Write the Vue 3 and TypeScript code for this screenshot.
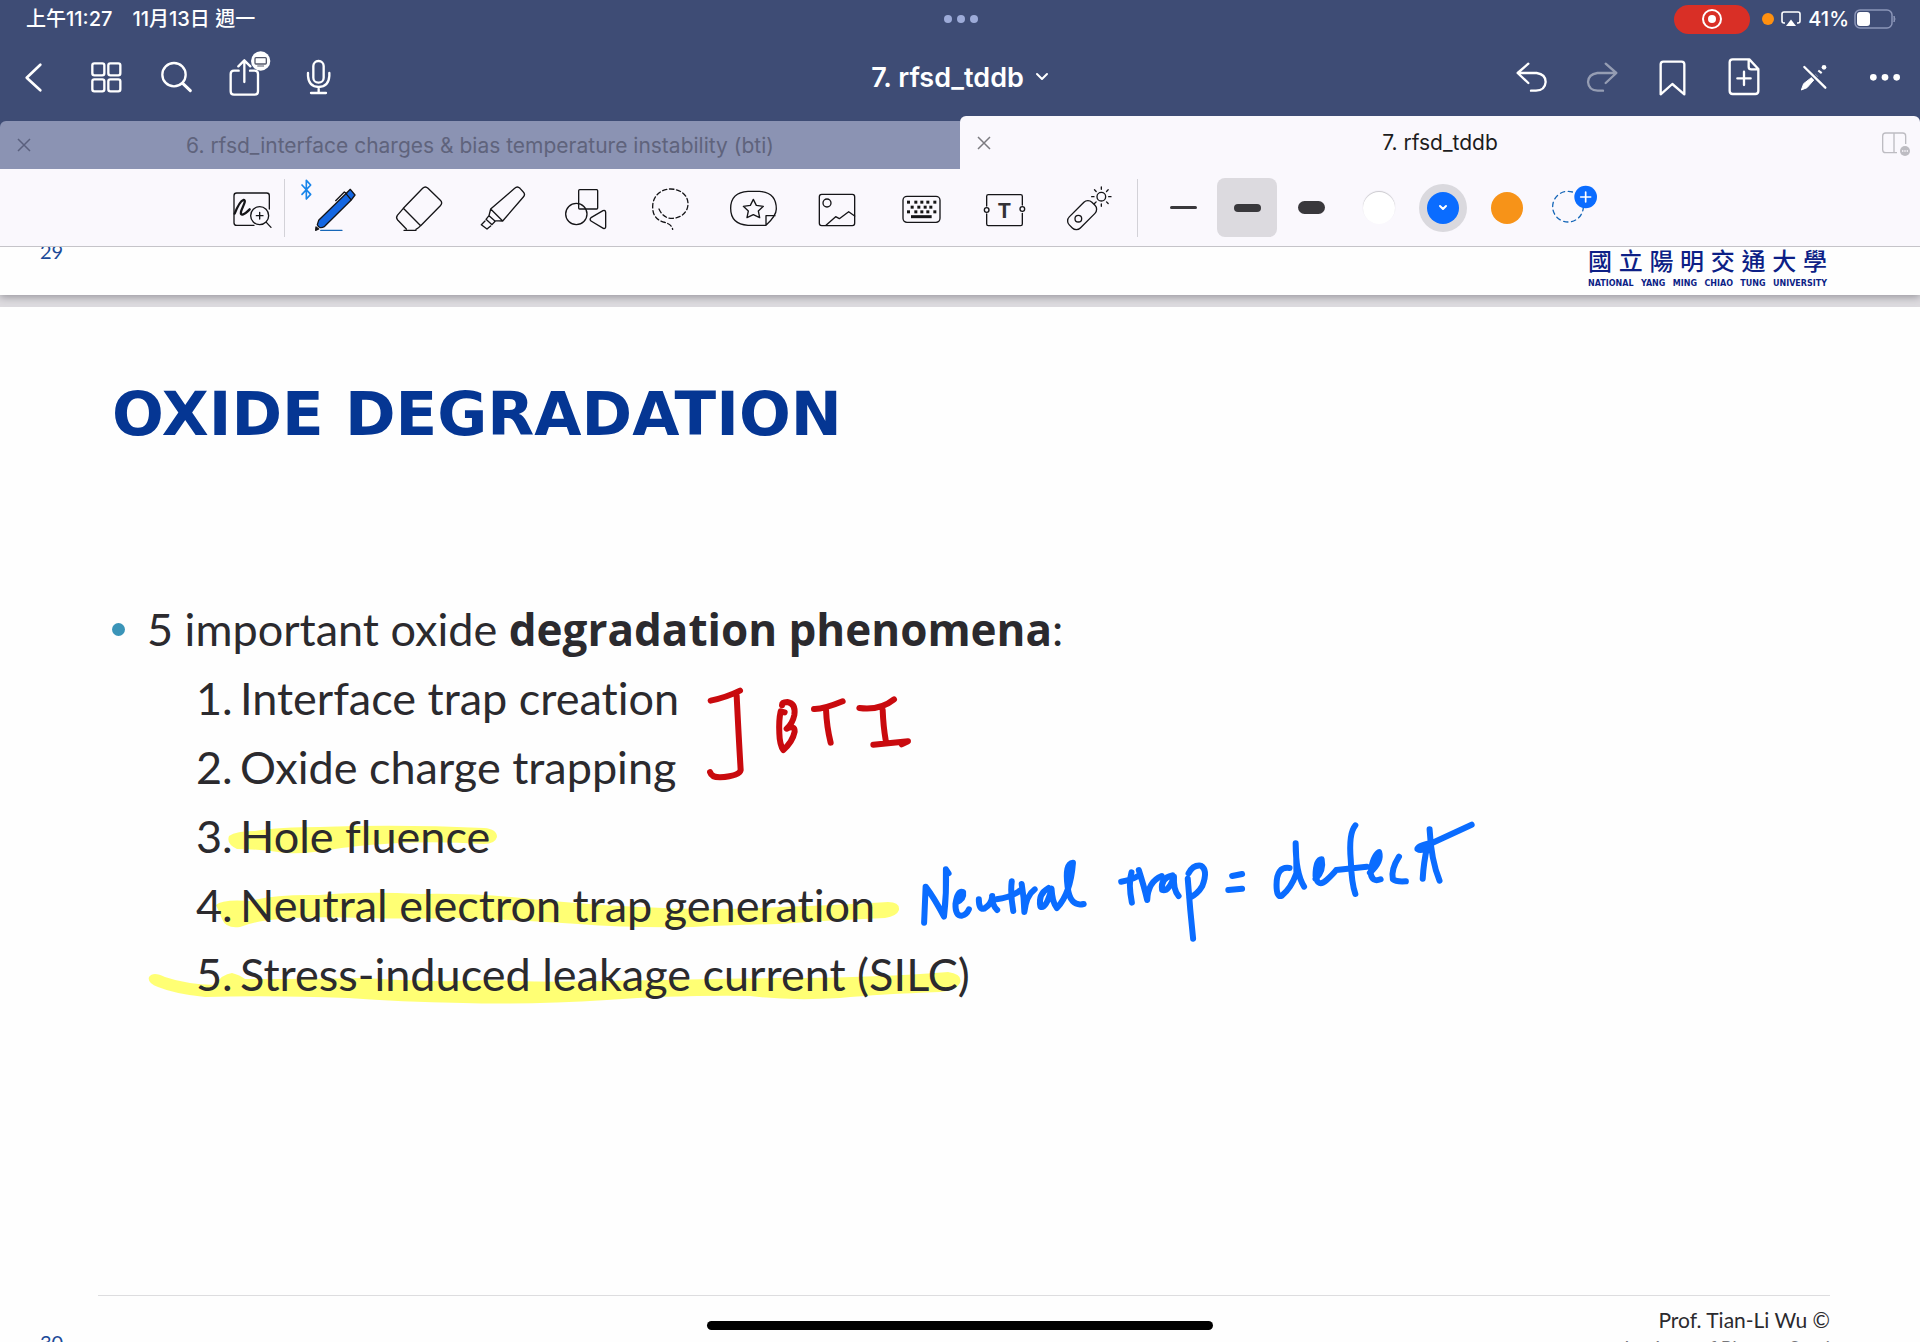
<script setup lang="ts">
import { ref } from 'vue'

interface Phenomenon {
  n: number
  label: string
}

const phenomena: Phenomenon[] = [
  { n: 1, label: 'Interface trap creation' },
  { n: 2, label: 'Oxide charge trapping' },
  { n: 3, label: 'Hole fluence' },
  { n: 4, label: 'Neutral electron trap generation' },
  { n: 5, label: 'Stress-induced leakage current (SILC)' },
]

const schoolName: string[] = [...'國立陽明交通大學']
const schoolWords: string[] = 'NATIONAL YANG MING CHIAO TUNG UNIVERSITY'.split(' ')

const widths: string[] = ['thin', 'medium', 'thick']
const activeWidth = ref<string>('medium')

const keys: [number, number][] = [
  ...[745, 767, 785, 803, 824].map((x): [number, number] => [x, 111]),
  ...[756, 776, 795, 812].map((x): [number, number] => [x, 126]),
  ...[745, 767, 785, 803, 824].map((x): [number, number] => [x, 140]),
]
const rays: number[] = [0, 45, 90, 135, 180, 225, 270, 315]
</script>

<template>
  <div class="app">
    <header class="chrome">
      <div class="status">
        <div class="status-side">
          <span>上午11:27</span>
          <span>11月13日 週一</span>
        </div>
        <div class="dots"><i></i><i></i><i></i></div>
        <div class="status-side end">
          <span class="rec">
            <svg width="20" height="20" viewBox="0 0 20 20"><circle cx="10" cy="10" r="9" fill="none" stroke="#fff" stroke-width="2" /><circle cx="10" cy="10" r="4" fill="#fff" /></svg>
          </span>
          <i class="mic-dot"></i>
          <svg class="cast" width="20" height="16" viewBox="0 0 20 16"><path d="M4 12H3Q1 12 1 10V3Q1 1 3 1H17Q19 1 19 3V10Q19 12 17 12H16" fill="none" stroke="#fff" stroke-width="1.6" /><path d="M10 8.500L15 15H5Z" fill="#fff" /></svg>
          <span class="percent">41%</span>
          <svg class="battery" width="42" height="20" viewBox="0 0 42 20"><rect x="1" y="1" width="37" height="18" rx="5" fill="none" stroke="#8b95b8" stroke-width="1.500" /><rect x="3" y="3" width="13" height="14" rx="3" fill="#fff" /><path d="M40 7Q42 10 40 13Z" fill="#8b95b8" stroke="#8b95b8" /></svg>
        </div>
      </div>

      <nav class="nav">
        <div class="nav-group">
          <button class="icon" aria-label="Back"><svg viewBox="30 159 144 144" class="line bold"><path d="M121 194L80 233L121 271" /></svg></button>
          <button class="icon" aria-label="Thumbnails"><svg viewBox="243 159 144 144" class="line"><rect x="277" y="190" width="36" height="36" rx="6" /><rect x="325" y="190" width="36" height="36" rx="6" /><rect x="277" y="238" width="36" height="36" rx="6" /><rect x="325" y="238" width="36" height="36" rx="6" /></svg></button>
          <button class="icon" aria-label="Search"><svg viewBox="456 159 144 144" class="line"><circle cx="522" cy="224" r="35" /><path d="M548 250L571 272" stroke-width="9" /></svg></button>
          <button class="icon" aria-label="Share">
            <svg viewBox="669 159 144 144" class="line"><path d="M716 212H702Q692 212 692 222V274Q692 284 702 284H764Q774 284 774 274V222Q774 212 764 212H750M733 246V182M715 199L733 181L751 199" /><circle cx="782" cy="183" r="29" fill="#fff" stroke="none" /><rect x="765" y="173" width="34" height="19" rx="3" stroke="#55596b" stroke-width="4" /><path d="M773 198H791" stroke="#55596b" stroke-width="3" /></svg>
          </button>
          <button class="icon" aria-label="Record"><svg viewBox="882 159 144 144" class="line"><rect x="940" y="183" width="31" height="65" rx="15" /><path d="M924 219V228Q926 260 956 261Q986 260 988 228V219M956 261V278M933 279H978" /></svg></button>
        </div>
        <button class="doc-title">
          7. rfsd_tddb
          <svg width="12" height="8" viewBox="0 0 12 8" class="line"><path d="M1 1L6 6L11 1" stroke-width="2" /></svg>
        </button>
        <div class="nav-group end">
          <button class="icon" aria-label="Undo"><svg viewBox="18 159 144 144" class="line"><path d="M85 191L53 219L85 249M54 219H110Q137 223 137 246Q135 271 108 272H93" /></svg></button>
          <button class="icon dim" aria-label="Redo"><svg viewBox="231 159 144 144" class="line"><path d="M317 191L349 219L317 249M348 219H292Q265 223 264 246Q266 271 293 272H309" /></svg></button>
          <button class="icon" aria-label="Bookmark"><svg viewBox="444 159 144 144" class="line"><path d="M482 193Q482 185 490 185H545Q553 185 553 193V283L517 252L482 283Z" /></svg></button>
          <button class="icon" aria-label="Add page"><svg viewBox="657 159 144 144" class="line"><path d="M748 178H698Q689 178 689 187V273Q689 282 698 282H766Q775 282 775 273V207ZM746 180V200Q746 208 754 208H773M732 215V255M712 235H752" /></svg></button>
          <button class="icon" aria-label="Read only"><svg viewBox="870 159 144 144"><path d="M904 270L911 251L938 230L944 237L921 263Z" fill="#fff" stroke="#fff" stroke-width="3" stroke-linejoin="round" /><path d="M942 234L950 226M958 218L962 213" stroke="#fff" stroke-width="13" /><circle cx="972" cy="202" r="7" fill="#fff" /><path d="M909 196L976 263" stroke="#3e4c75" stroke-width="15" /><path d="M913 201L976 263" stroke="#fff" stroke-width="7" stroke-linecap="round" /></svg></button>
          <button class="icon" aria-label="More"><svg viewBox="1083 159 144 144" fill="#fff"><circle cx="1120" cy="232" r="10" /><circle cx="1155" cy="232" r="10" /><circle cx="1190" cy="232" r="10" /></svg></button>
        </div>
      </nav>

      <div class="tabs">
        <div class="tab">
          <button class="close" aria-label="Close tab"><svg width="14" height="14" viewBox="0 0 14 14"><path d="M1 1L13 13M13 1L1 13" /></svg></button>
          <span class="tab-name">6. rfsd_interface charges &amp; bias temperature instability (bti)</span>
          <span class="tab-tail"></span>
        </div>
        <div class="tab active">
          <button class="close" aria-label="Close tab"><svg width="14" height="14" viewBox="0 0 14 14"><path d="M1 1L13 13M13 1L1 13" /></svg></button>
          <span class="tab-name">7. rfsd_tddb</span>
          <button class="tab-tail" aria-label="Split view"><svg width="30" height="26" viewBox="0 0 90 78"><path d="M48 68H14Q5 68 5 59V18Q5 9 14 9H65Q74 9 74 18V42M39 9V68" fill="none" stroke="#bdbcc2" stroke-width="4" /><circle cx="72" cy="63" r="15" fill="#bdbcc2" /><path d="M63 63h4M70 63h4M77 63h4" stroke="#faf8fd" stroke-width="4" /></svg></button>
        </div>
      </div>
    </header>

    <div class="toolbar" role="toolbar" aria-label="Drawing tools">
      <button class="tool" aria-label="Zoom window"><svg viewBox="84 57 144 144" class="ink"><path d="M208 132V92Q208 84 200 84H110Q102 84 102 92V173Q102 181 110 181H162" /><path d="M104 146C112 126 120 108 130 105C142 104 126 128 123 140C120 156 134 148 149 133" stroke-width="7" /><circle cx="179" cy="152" r="27" /><path d="M199 172L213 187M169 152H189M179 142V162" /></svg></button>
      <span class="divider first"></span>
      <div class="tools">
        <button class="tool" aria-label="Pen">
          <svg viewBox="333 57 144 144" class="ink"><path d="M306 60L332 88L319 102V46L332 60L306 88" stroke="#1684ea" stroke-width="5" /><path d="M352 179L356 166L436 88L451 73L465 90L453 106L374 184Q358 194 352 179Z" fill="#1467e2" /><path d="M438 86L453 104M407 107L433 81L440 86" /><path d="M348 186L356 192L347 196Z" fill="#151515" /><path d="M362 196H426" stroke="#1667b8" /></svg>
        </button>
        <button class="tool" aria-label="Eraser"><svg viewBox="585 57 144 144" class="ink"><path d="M610 130L668 70Q676 62 684 70L721 106Q729 114 721 122L662 182ZM610 130L592 151Q587 158 593 165L619 192M662 182Q656 189 648 193M612 196H648" /></svg></button>
        <button class="tool" aria-label="Highlighter"><svg viewBox="837 57 144 144" class="ink"><path d="M872 132L944 70Q952 62 960 70L970 81Q977 88 970 96L908 168ZM872 132L867 152L884 167L908 168M867 152L858 163L876 179L886 168M855 168L844 179L861 192L872 183" /></svg></button>
        <button class="tool" aria-label="Shapes"><svg viewBox="1089 57 144 144" class="ink"><rect x="1136" y="74" width="57" height="58" rx="3" /><circle cx="1129" cy="147" r="32" /><path d="M1173 158Q1168 163 1173 168L1210 190Q1217 192 1217 185V142Q1216 134 1209 137Z" /></svg></button>
        <button class="tool" aria-label="Lasso"><svg viewBox="-39 57 144 144" class="ink"><path d="M-3 132C6 152 20 161 38 160C66 158 84 140 84 116C84 90 60 72 32 72C4 72 -22 92 -22 125C-22 150 -12 164 10 171C30 176 36 184 38 193" stroke-dasharray="13 8" /></svg></button>
        <button class="tool" aria-label="Elements"><svg viewBox="213 57 144 144" class="ink"><path d="M318 181H264Q212 178 212 130Q212 82 264 79H298Q349 82 349 132Q349 152 318 181V152H345" /><path d="M280 103L289 121L310 124L295 138L299 158L280 149L261 158L265 138L250 124L271 121Z" /></svg></button>
        <button class="tool" aria-label="Image"><svg viewBox="465 57 144 144" class="ink"><rect x="478" y="88" width="106" height="94" rx="7" /><circle cx="501" cy="114" r="12" /><path d="M498 181L527 155L538 161L566 140L584 153" /></svg></button>
        <button class="tool" aria-label="Keyboard"><svg viewBox="717 57 144 144" class="ink"><rect x="729" y="94" width="111" height="78" rx="12" /><rect v-for="([x, y], i) in keys" :key="i" :x="x - 4" :y="y - 4" width="9" height="9" fill="#151515" stroke="none" /><path d="M753 155H815" stroke-width="9" stroke-linecap="butt" /></svg></button>
        <button class="tool" aria-label="Text"><svg viewBox="969 57 144 144" class="ink"><path d="M980 123V94Q980 89 985 89H1082Q1087 89 1087 94V120M1087 145V177Q1087 182 1082 182H985Q980 182 980 177V147" /><circle cx="980" cy="135" r="7" /><circle cx="1087" cy="132" r="7" /><text x="1033" y="159" text-anchor="middle" class="t-glyph">T</text></svg></button>
        <button class="tool" aria-label="Laser pointer"><svg viewBox="1221 57 144 144" class="ink"><rect x="1218" y="127" width="96" height="47" rx="17" transform="rotate(-45 1266 150)" /><circle cx="1255" cy="161" r="10" /><circle cx="1324" cy="95" r="13" /><path v-for="r in rays" :key="r" d="M1324 73V66" :transform="`rotate(${r} 1324 95)`" /></svg></button>
      </div>
      <span class="divider second"></span>
      <div class="choices">
        <button v-for="w in widths" :key="w" class="choice" :class="{ chosen: w === activeWidth }" :aria-label="w" @click="activeWidth = w"><i class="stroke" :class="w"></i></button>
      </div>
      <div class="choices colours">
        <button class="choice" aria-label="White"><i class="swatch white"></i></button>
        <button class="choice" aria-label="Blue"><i class="ring"><i class="swatch blue"><svg width="10" height="6" viewBox="0 0 10 6" class="line"><path d="M2 1L5 4L8 1" stroke-width="2" /></svg></i></i></button>
        <button class="choice" aria-label="Orange"><i class="swatch orange"></i></button>
        <button class="choice" aria-label="Add colour"><svg width="48" height="48" viewBox="1281 57 144 144" class="line"><circle cx="1344" cy="125" r="46" stroke="#1667b8" stroke-width="4" stroke-dasharray="13 11" /><circle cx="1397" cy="96" r="34" fill="#0a6cff" stroke="none" /><path d="M1382 96H1412M1397 81V111" stroke-width="5" /></svg></button>
      </div>
    </div>

    <main class="viewer">
      <section class="page previous">
        <span class="page-no">29</span>
        <div class="school">
          <div class="school-zh"><span v-for="(c, i) in schoolName" :key="i">{{ c }}</span></div>
          <div class="school-en"><span v-for="w in schoolWords" :key="w">{{ w }}</span></div>
        </div>
      </section>

      <section class="page slide">
        <svg class="layer" aria-hidden="true">
          <g fill="#ffff74">
            <path d="M229 529Q236 524 255 524Q280 520 320 520Q400 517 484 521Q497 522 497 530Q495 537 484 537Q440 534 400 536Q360 538 335 542Q310 547 285 546Q258 542 237 542Q226 537 229 529Z" />
            <path d="M216 598Q222 592 250 594Q275 587 320 588Q365 584 420 587Q480 586 530 592Q580 597 640 600Q710 604 780 600Q840 598 888 595Q900 595 899 603Q897 609 885 611Q830 613 779 617Q730 618 693 620Q630 621 578 617Q520 613 463 611Q400 612 365 611Q310 609 279 612Q255 614 240 620Q226 622 222 612Z" />
            <path d="M149 670Q153 664 165 670Q185 677 215 678Q222 667 232 666Q240 668 245 672Q310 672 365 671Q430 676 492 673Q550 676 607 674Q700 672 779 671Q870 671 948 665Q963 667 960 676Q956 684 940 685Q880 687 840 691Q790 694 750 689Q680 688 607 693Q530 698 463 696Q400 695 348 691Q270 688 205 690Q175 687 158 680Q147 676 149 670Z" />
          </g>
        </svg>

        <h1>OXIDE DEGRADATION</h1>
        <div class="body">
          <p class="lead"><i class="bullet"></i><span>5 important oxide <b>degradation phenomena</b>:</span></p>
          <ol>
            <li v-for="p in phenomena" :key="p.n"><span class="num">{{ p.n }}.</span>{{ p.label }}</li>
          </ol>
        </div>

        <svg class="layer" role="img" aria-label="Handwritten notes: BTI; Neutral trap = defect">
          <svg x="680" y="363" width="260" height="130" viewBox="0 0 780 390" class="pen red">
            <path d="M92 92Q140 82 180 62M170 78Q176 200 182 300Q178 318 120 322Q95 322 90 306" />
            <path d="M306 106Q306 96 322 96Q348 100 343 135Q338 160 320 176Q345 165 344 185Q338 215 310 240Q299 225 298 190Q296 150 302 124L314 127" />
            <path d="M402 117Q430 118 488 94M438 118Q440 170 452 218" />
            <path d="M538 114Q600 122 642 88M608 120Q610 170 617 210M580 224Q640 218 684 214L665 223" />
          </svg>
          <svg x="900" y="503" width="600" height="140" viewBox="0 0 1568 420" preserveAspectRatio="none" class="pen blue">
            <path d="M63 338L67 230Q90 265 115 320Q122 250 120 178L127 190" />
            <path d="M146 278Q168 268 165 246Q150 240 145 282Q144 318 162 317Q174 314 180 298" />
            <path d="M206 268Q206 300 220 296Q240 282 241 258Q240 285 254 300" />
            <path d="M292 214Q288 250 296 303M252 268Q290 262 316 240" />
            <path d="M318 222Q324 260 325 306Q330 256 352 238" />
            <path d="M388 234Q360 252 367 290Q382 298 396 236Q398 278 410 294Q446 250 452 158Q430 160 438 230Q444 292 480 282" />
            <path d="M605 187Q596 220 606 278M578 215Q605 210 622 198M624 180Q638 230 646 270Q648 215 684 198" />
            <path d="M712 196Q680 204 685 240Q702 246 716 200Q714 240 728 258" />
            <path d="M752 206Q758 300 766 386M754 190Q766 164 786 167Q806 180 790 228Q778 252 756 264" />
            <path d="M868 198L894 192M858 240L894 236" />
            <path d="M1018 174Q984 168 984 225Q984 264 998 257Q1022 235 1036 190Q1036 140 1034 100Q1034 190 1056 230" />
            <path d="M1086 207Q1108 182 1102 148Q1086 150 1086 198Q1092 234 1115 210Q1132 192 1140 180L1220 170M1190 46Q1172 70 1178 150Q1180 220 1190 252" />
            <path d="M1228 188Q1260 155 1252 126Q1234 140 1230 190Q1234 218 1256 208" />
            <path d="M1304 140Q1282 180 1288 208Q1296 216 1322 214" />
            <path d="M1384 58Q1388 150 1410 212M1494 44L1392 98Q1352 106 1352 117Q1364 126 1378 108Q1368 160 1366 206" />
          </svg>
        </svg>

        <footer class="credit">
          <span class="page-no">30</span>
          <div class="author">
            <span>Prof. Tian-Li Wu ©</span>
            <span class="faint">Institute of Pioneer Semi</span>
          </div>
        </footer>
      </section>
      <div class="home-bar"></div>
    </main>
  </div>
</template>

<style>
body {
  margin: 0;
}
</style>

<style scoped>
.app {
  display: flex;
  flex-direction: column;
  height: 100vh;
  overflow: hidden;
  font-family: Inter, 'Noto Sans CJK TC', sans-serif;
  background: #dddbdf;
}
button {
  padding: 0;
  border: 0;
  background: none;
  font: inherit;
  color: inherit;
}
svg {
  display: block;
  overflow: visible;
}
.line {
  fill: none;
  stroke: #fff;
  stroke-width: 7;
  stroke-linecap: round;
  stroke-linejoin: round;
}
.line.bold {
  stroke-width: 8;
}
.ink {
  fill: none;
  stroke: #151518;
  stroke-width: 4;
  stroke-linecap: round;
  stroke-linejoin: round;
}
.chrome {
  background: #3e4c75;
  color: #fff;
}
.status {
  display: grid;
  grid-template-columns: 1fr auto 1fr;
  align-items: center;
  height: 38px;
  padding: 0 24px 0 26px;
  font-size: 20px;
  line-height: 24px;
  font-weight: 500;
}
.status-side {
  display: flex;
  align-items: center;
  gap: 20px;
}
.status-side.end {
  justify-content: flex-end;
  gap: 0;
}
.dots {
  display: flex;
  gap: 5px;
}
.dots i {
  width: 8px;
  height: 8px;
  border-radius: 50%;
  background: #9dabd8;
}
.rec {
  display: flex;
  align-items: center;
  justify-content: center;
  width: 76px;
  height: 29px;
  border-radius: 15px;
  background: #d92f26;
}
.mic-dot {
  width: 12px;
  height: 12px;
  margin: 0 7px 0 12px;
  border-radius: 50%;
  background: #ff9010;
}
.percent {
  margin: 0 5px 0 7px;
}
.nav {
  display: grid;
  grid-template-columns: 1fr auto 1fr;
  align-items: center;
  height: 78px;
  padding: 0 11px 0 10px;
}
.nav-group {
  display: flex;
  gap: 23px;
}
.nav-group.end {
  justify-content: flex-end;
}
.icon,
.icon svg {
  width: 48px;
  height: 48px;
}
.dim {
  opacity: 0.45;
}
.doc-title {
  display: flex;
  align-items: center;
  gap: 12px;
  font-size: 27px;
  font-weight: 600;
}
.tabs {
  display: flex;
  align-items: flex-end;
  height: 53px;
}
.tab {
  flex: 1;
  display: grid;
  grid-template-columns: 48px 1fr 48px;
  align-items: center;
  height: 48px;
  border-radius: 6px 0 0 0;
  background: #8b93b3;
  color: #5f637c;
  font-size: 21px;
}
.tab.active {
  height: 53px;
  border-radius: 6px 6px 0 0;
  background: #faf8fd;
  color: #1c1c20;
}
.tab-name {
  text-align: center;
}
.tab-tail svg {
  margin: 0 auto;
}
.close svg {
  margin: 0 auto;
  fill: none;
  stroke: #5a607e;
  stroke-width: 1.5;
}
.active .close svg {
  stroke: #7c7b80;
}
.toolbar {
  display: flex;
  align-items: flex-start;
  height: 77px;
  padding: 9px 0 0 228px;
  box-sizing: border-box;
  background: #faf8fd;
}
.tools {
  display: flex;
  gap: 36px;
}
.tool {
  flex: none;
  width: 48px;
  height: 60px;
}
.tool svg {
  width: 48px;
  height: 48px;
}
.t-glyph {
  font: 700 62px Inter, sans-serif;
  fill: #333236;
  stroke: none;
}
.divider {
  flex: none;
  width: 1px;
  height: 58px;
  margin: 1px 0;
  background: #d3d2d8;
}
.divider.first {
  margin-left: 8px;
  margin-right: 26px;
}
.divider.second {
  margin-left: 22px;
  margin-right: 15px;
}
.choices {
  display: flex;
  gap: 4px;
}
.colours {
  margin-left: 8px;
}
.choice {
  display: flex;
  align-items: center;
  justify-content: center;
  width: 60px;
  height: 59px;
  border-radius: 8px;
}
.chosen {
  background: #dcdadf;
}
.stroke {
  width: 27px;
  border-radius: 7px;
  background: #39383c;
}
.thin {
  height: 3px;
}
.medium {
  height: 8px;
}
.thick {
  height: 13px;
}
.swatch {
  display: flex;
  align-items: center;
  justify-content: center;
  width: 32px;
  height: 32px;
  border-radius: 50%;
}
.white {
  background: #fff;
  box-shadow: 0 -1px 1px #c9c8cd;
}
.ring {
  display: flex;
  align-items: center;
  justify-content: center;
  width: 48px;
  height: 48px;
  border-radius: 50%;
  background: #dad9de;
}
.blue {
  background: #0a6cff;
}
.orange {
  background: #f79318;
}
.viewer {
  position: relative;
  flex: 1;
  display: flex;
  flex-direction: column;
  gap: 12px;
  min-height: 0;
  overflow: hidden;
  border-top: 1px solid #c5c4c9;
}
.page {
  flex: none;
  background: #fefefe;
  font-family: Lato, 'Noto Sans CJK TC', sans-serif;
}
.previous {
  display: flex;
  justify-content: space-between;
  align-items: flex-start;
  height: 48px;
  padding: 0 93px 0 40px;
  box-sizing: border-box;
  box-shadow: 0 2px 8px #96949b;
}
.page-no {
  font-size: 20px;
  line-height: 24px;
  color: #1c4a98;
}
.previous .page-no {
  margin-top: -8px;
}
.school {
  width: 239px;
  color: #0d1f86;
}
.school-zh,
.school-en {
  display: flex;
  justify-content: space-between;
}
.school-zh {
  font: 500 24px/26px 'Noto Sans CJK TC', sans-serif;
}
.school-en {
  font: 700 8px/22px 'DejaVu Sans', sans-serif;
}
.slide {
  position: relative;
  flex: 1;
  display: flex;
  flex-direction: column;
  min-height: 0;
  color: #2b2a2e;
}
.layer {
  position: absolute;
  top: 0;
  left: 0;
  width: 100%;
  height: 100%;
  pointer-events: none;
}
.pen path {
  fill: none;
  stroke-linecap: round;
  stroke-linejoin: round;
  stroke-width: 6;
  vector-effect: non-scaling-stroke;
}
.red path {
  stroke: #c90a0e;
}
.pen.blue {
  background: none;
}
.pen.blue path {
  stroke: #0a6cff;
}
h1 {
  position: relative;
  margin: 71px 112px 0;
  font-family: 'DejaVu Sans', sans-serif;
  font-size: 61px;
  line-height: 72px;
  font-weight: 700;
  color: #053693;
}
.body {
  position: relative;
  margin: 145px 112px 0;
  font-size: 45px;
  line-height: 69px;
  font-variant-ligatures: no-common-ligatures;
}
.body b {
  font-family: 'Open Sans', sans-serif;
  font-size: 44px;
  line-height: 60px;
}
.lead {
  display: flex;
  align-items: center;
  gap: 22px;
  margin: 0;
}
.bullet {
  width: 13px;
  height: 13px;
  border-radius: 50%;
  background: #3a94b8;
}
ol {
  margin: 0;
  padding: 0 0 0 84px;
  list-style: none;
}
li {
  display: flex;
}
.num {
  width: 44px;
}
.credit {
  display: flex;
  justify-content: space-between;
  align-items: flex-start;
  height: 46px;
  margin: auto 90px 0 98px;
  border-top: 1px solid #dddddf;
}
.credit .page-no {
  margin: 34px 0 0 -58px;
}
.author {
  display: flex;
  flex-direction: column;
  align-items: flex-end;
  padding-top: 10px;
  font-size: 21px;
  line-height: 28px;
}
.faint {
  font-size: 19px;
  color: #77767a;
}
.home-bar {
  position: absolute;
  left: 50%;
  bottom: 12px;
  width: 506px;
  height: 9px;
  border-radius: 5px;
  background: #000;
  transform: translateX(-50%);
}
</style>
